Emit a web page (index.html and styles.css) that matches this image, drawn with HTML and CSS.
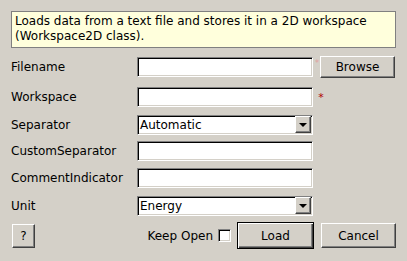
FILE: index.html
```html
<!DOCTYPE html>
<html lang="en">
<head>
  <meta charset="UTF-8">
  <title>LoadAscii</title>
  <link rel="stylesheet" href="styles.css">
</head>
<body>

<div class="dialog">
  <div class="info">Loads data from a text file and stores it in a 2D workspace (Workspace2D class).</div>

  <div class="form">
    <span class="label">Filename</span>
    <div class="field first"></div>
    <div class="extra first"><span class="star hidden">*</span><button class="btn browse">Browse</button></div>

    <span class="label">Workspace</span>
    <div class="field"></div>
    <div class="extra"><span class="star">*</span></div>

    <span class="label">Separator</span>
    <div class="combo"><span>Automatic</span><span class="arrow"></span></div>
    <div class="extra"></div>

    <span class="label">CustomSeparator</span>
    <div class="field"></div>
    <div class="extra"></div>

    <span class="label">CommentIndicator</span>
    <div class="field"></div>
    <div class="extra"></div>

    <span class="label">Unit</span>
    <div class="combo"><span>Energy</span><span class="arrow"></span></div>
    <div class="extra"></div>
  </div>

  <div class="footer">
    <button class="btn help">?</button>
    <span class="spacer"></span>
    <span class="keep">Keep Open</span>
    <span class="check"></span>
    <button class="btn load">Load</button>
    <button class="btn cancel">Cancel</button>
  </div>
</div>

</body>
</html>
```

FILE: styles.css
```css
body {
  margin: 0;
  background: #d4d0c8;
  font-family: "DejaVu Sans", sans-serif;
  font-size: 12px;
  color: #000;
}

.dialog {
  padding: 11px 11px 0 11px;
}

.info {
  background: #ffffdc;
  border: 1px solid #808080;
  padding: 2px 3px 3px 3px;
  line-height: 15px;
  height: 30px;
}

.form {
  display: grid;
  grid-template-columns: 126px 176px auto;
  grid-template-rows: 31px 28px 26px 27px 28px 26px;
  margin-top: 8px;
  align-items: start;
}

.label {
  height: 20px;
  line-height: 20px;
}

.form .label:first-child {
  margin-top: 1px;
}

/* sunken line edit */
.field,
.combo {
  height: 16px;
  background: #fff;
  border-top: 1px solid #808080;
  border-left: 1px solid #808080;
  border-right: 1px solid #fff;
  border-bottom: 1px solid #fff;
  box-shadow: inset 1px 1px #000, inset -1px -1px #d4d0c8;
  padding: 1px;
}

.field.first {
  margin-top: 1px;
}

.combo {
  display: flex;
  align-items: center;
  line-height: 16px;
}

.combo span:first-child {
  flex: 1;
  padding-left: 1px;
}

.arrow {
  width: 14px;
  height: 15px;
  background: #d4d0c8;
  border-top: 1px solid #fff;
  border-left: 1px solid #fff;
  border-right: 1px solid #404040;
  border-bottom: 1px solid #404040;
  box-shadow: inset -1px -1px #808080;
  margin-top: -1px;
  position: relative;
}

.arrow::after {
  content: "";
  position: absolute;
  left: 3px;
  top: 6px;
  border-left: 4px solid transparent;
  border-right: 4px solid transparent;
  border-top: 4px solid #000;
}

.extra {
  display: flex;
  align-items: flex-start;
}

.star {
  color: #b00000;
  width: 16px;
  text-align: center;
  line-height: 20px;
  margin-top: 1px;
  font-size: 11px;
}

.star.hidden {
  width: 5px;
  overflow: hidden;
  text-align: left;
  margin-left: 2px;
  color: #e0a0a0;
  font-size: 8px;
  margin-top: -2px;
}

/* raised push button */
.btn {
  font-family: "DejaVu Sans", sans-serif;
  font-size: 12px;
  color: #000;
  background: #d4d0c8;
  border-top: 1px solid #fff;
  border-left: 1px solid #fff;
  border-right: 1px solid #404040;
  border-bottom: 1px solid #404040;
  box-shadow: inset -1px -1px #808080;
  padding: 0;
  margin: 0;
  height: 22px;
}

.browse {
  width: 75px;
}

.footer {
  display: flex;
  align-items: center;
  height: 27px;
  margin-top: 0;
}

.help {
  width: 23px;
  height: 24px;
  margin-left: 1px;
}

.spacer {
  flex: 1;
}

.keep {
  margin-right: 5px;
}

.check {
  width: 9px;
  height: 9px;
  background: #fff;
  border-top: 1px solid #808080;
  border-left: 1px solid #808080;
  border-right: 1px solid #fff;
  border-bottom: 1px solid #fff;
  box-shadow: inset 1px 1px #000, inset -1px -1px #d4d0c8;
  padding: 1px;
  margin-right: 6px;
}

.load {
  width: 77px;
  height: 27px;
  border: 1px solid #000;
  box-shadow: inset 1px 1px #fff, inset -1px -1px #404040, inset -2px -2px #808080;
}

.cancel {
  width: 75px;
  height: 25px;
  margin-left: 7px;
}
```
